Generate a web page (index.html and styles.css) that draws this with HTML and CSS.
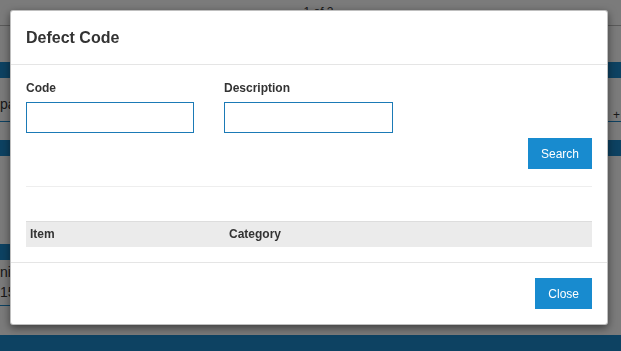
FILE: index.html
```html
<!DOCTYPE html>
<html lang="en">
<head>
  <meta charset="UTF-8">
  <meta name="viewport" content="width=device-width, initial-scale=1.0">
  <title>Defect Code</title>
  <link rel="stylesheet" href="styles.css">
</head>
<body>

<!-- page behind the dialog -->
<div class="page">
  <div class="pager">1 of 2</div>
  <div class="spacer s36"></div>
  <div class="band"></div>
  <div class="rows">
    <span class="cut">pa</span>
    <span class="plus">+</span>
  </div>
  <div class="spacer s18"></div>
  <div class="band"></div>
  <div class="spacer s88"></div>
  <div class="half">
    <div class="band"></div>
    <div class="cut lbl">nic</div>
    <div class="cut val">15</div>
  </div>
  <div class="bottom"></div>
</div>

<div class="backdrop"></div>

<!-- dialog -->
<div class="modal">
  <div class="modal-header">
    <h4 class="modal-title">Defect Code</h4>
  </div>
  <div class="modal-body">
    <div class="fields">
      <div class="field">
        <label for="code">Code</label>
        <input type="text" id="code">
      </div>
      <div class="field">
        <label for="desc">Description</label>
        <input type="text" id="desc">
      </div>
    </div>
    <div class="actions">
      <button class="btn">Search</button>
    </div>
    <hr>
    <table class="grid">
      <thead>
        <tr><th class="col-item">Item</th><th>Category</th></tr>
      </thead>
    </table>
  </div>
  <div class="modal-footer">
    <button class="btn">Close</button>
  </div>
</div>

</body>
</html>
```

FILE: styles.css
```css
body { margin: 0; font-family: "Liberation Sans", Arial, sans-serif; font-size: 12px; color: #333; background: #f6f6f6; overflow: hidden; }

/* background page */
.page { height: 351px; position: relative; }
.pager { height: 25px; border-bottom: 1px solid #b5b5b5; text-align: center; line-height: 25px; padding-left: 16px; font-size: 12px; }
.spacer.s36 { height: 36px; }
.spacer.s18 { height: 18px; }
.spacer.s88 { height: 88px; }
.band { height: 16px; background: #1a85c5; }
.rows { height: 43px; border-bottom: 1px solid #1a85c5; display: flex; justify-content: space-between; align-items: center; font-size: 14px; }
.cut { font-size: 14px; padding-top: 8px; }
.plus { font-size: 12px; padding-top: 30px; margin-right: 1px; }
.half { width: 305px; }
.half .lbl { height: 20px; padding-top: 4px; }
.half .val { width: 24px; border-bottom: 1px solid #1a85c5; padding-top: 0; height: 21px; }
.bottom { position: absolute; left: 0; right: 0; bottom: 0; height: 16px; background: #1a85c5; }

/* overlay */
.backdrop { position: fixed; inset: 0; background: rgba(0, 0, 0, 0.5); }

/* dialog */
.modal {
  position: absolute;
  top: 10px;
  left: 10px;
  width: 598px;
  box-sizing: border-box;
  background: #fff;
  border: 1px solid rgba(0, 0, 0, 0.25);
  border-radius: 3px;
  box-shadow: 0 3px 9px rgba(0, 0, 0, 0.5);
}
.modal-header { padding: 15px; border-bottom: 1px solid #e5e5e5; }
.modal-title { margin: 0; font-size: 16px; line-height: 23px; font-weight: bold; color: #333; }
.modal-body { padding: 15px; }
.modal-footer { padding: 15px; border-top: 1px solid #e5e5e5; display: flex; justify-content: flex-end; }

.fields { display: flex; gap: 30px; }
.field label { display: block; font-weight: bold; line-height: 17px; margin-bottom: 5px; padding-top: 1px; margin-top: -1px; }
.field input { display: block; width: 168px; height: 31px; box-sizing: border-box; border: 1px solid #1b7ab6; border-radius: 0; padding: 0 6px; font: inherit; }
.field + .field input { width: 169px; }

.actions { display: flex; justify-content: flex-end; margin-top: 5px; }
.btn { height: 31px; padding: 0 13px; border: none; background: #188bcf; color: #fff; font-family: "Liberation Sans", Arial, sans-serif; font-size: 12px; cursor: pointer; }

hr { border: 0; border-top: 1px solid #eee; margin: 17px 0 0; }

.grid { width: 100%; border-collapse: collapse; margin-top: 34px; }
.grid th { text-align: left; background: #ebebeb; border-top: 1px solid #ddd; padding: 4px; line-height: 17px; font-weight: bold; }
.grid th.col-item { width: 191px; }
```
